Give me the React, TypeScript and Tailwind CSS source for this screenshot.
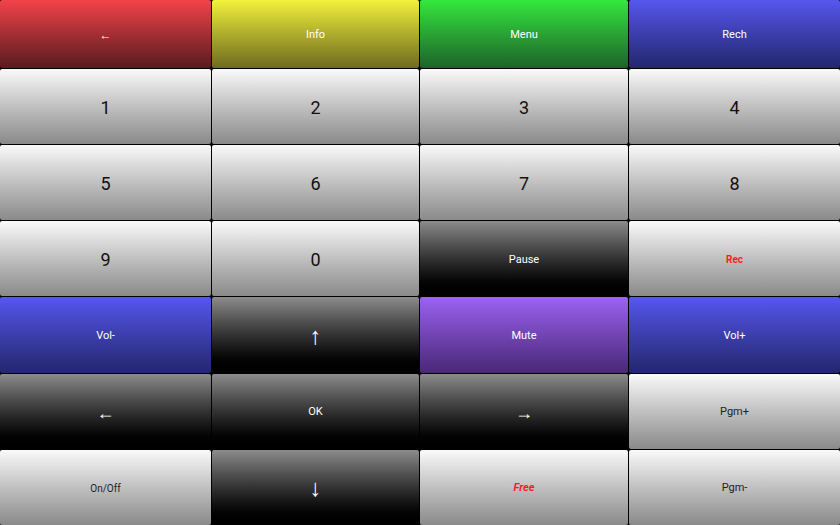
import React from 'react';

type Tone = 'red' | 'yellow' | 'green' | 'blue' | 'light' | 'dark' | 'purple';

interface Key {
  label: string;
  tone: Tone;
  text?: string;
}

const toneClass: Record<Tone, string> = {
  red: 'bg-gradient-to-b from-[#f4434a] to-[#5a1b1f] text-white',
  yellow: 'bg-gradient-to-b from-[#f4f23c] to-[#6e6c1e] text-white',
  green: 'bg-gradient-to-b from-[#34e83c] to-[#1c6428] text-white',
  blue: 'bg-gradient-to-b from-[#5558ee] to-[#24266e] text-white',
  light: 'bg-gradient-to-b from-[#fafafa] to-[#8a8a8a] text-[#111]',
  dark: 'bg-gradient-to-b from-[#8c8c8c] to-[#000000] text-white',
  purple: 'bg-gradient-to-b from-[#9c62f4] to-[#4a2876] text-white',
};

const rows: Key[][] = [
  [
    { label: '←', tone: 'red', text: 'text-[12px]' },
    { label: 'Info', tone: 'yellow' },
    { label: 'Menu', tone: 'green' },
    { label: 'Rech', tone: 'blue' },
  ],
  [
    { label: '1', tone: 'light', text: 'text-[18px]' },
    { label: '2', tone: 'light', text: 'text-[18px]' },
    { label: '3', tone: 'light', text: 'text-[18px]' },
    { label: '4', tone: 'light', text: 'text-[18px]' },
  ],
  [
    { label: '5', tone: 'light', text: 'text-[18px]' },
    { label: '6', tone: 'light', text: 'text-[18px]' },
    { label: '7', tone: 'light', text: 'text-[18px]' },
    { label: '8', tone: 'light', text: 'text-[18px]' },
  ],
  [
    { label: '9', tone: 'light', text: 'text-[18px]' },
    { label: '0', tone: 'light', text: 'text-[18px]' },
    { label: 'Pause', tone: 'dark' },
    { label: 'Rec', tone: 'light', text: 'text-[10px] font-bold !text-[#ff1a1a]' },
  ],
  [
    { label: 'Vol-', tone: 'blue' },
    { label: '↑', tone: 'dark', text: 'text-[24px]' },
    { label: 'Mute', tone: 'purple' },
    { label: 'Vol+', tone: 'blue' },
  ],
  [
    { label: '←', tone: 'dark', text: 'text-[18px]' },
    { label: 'OK', tone: 'dark' },
    { label: '→', tone: 'dark', text: 'text-[18px]' },
    { label: 'Pgm+', tone: 'light', text: 'text-[11px] !text-[#222]' },
  ],
  [
    { label: 'On/Off', tone: 'light', text: 'text-[10px] !text-[#222]' },
    { label: '↓', tone: 'dark', text: 'text-[24px]' },
    { label: 'Free', tone: 'light', text: 'text-[11px] font-bold italic !text-[#ff1a1a]' },
    { label: 'Pgm-', tone: 'light', text: 'text-[11px] !text-[#222]' },
  ],
];

export default function App() {
  return (
    <div
      className="w-[840px] h-[525px] bg-black grid grid-cols-[211px_207px_208px_1fr] grid-rows-[68px_repeat(6,1fr)] gap-[1px] overflow-hidden"
      style={{ fontFamily: 'Roboto, "Noto Sans", sans-serif' }}
    >
      {rows.flat().map((k, i) => (
        <button
          key={i}
          className={`flex items-center justify-center pt-[2px] rounded-[2px] ${toneClass[k.tone]} ${k.text ?? 'text-[11px]'}`}
        >
          {k.label}
        </button>
      ))}
    </div>
  );
}
